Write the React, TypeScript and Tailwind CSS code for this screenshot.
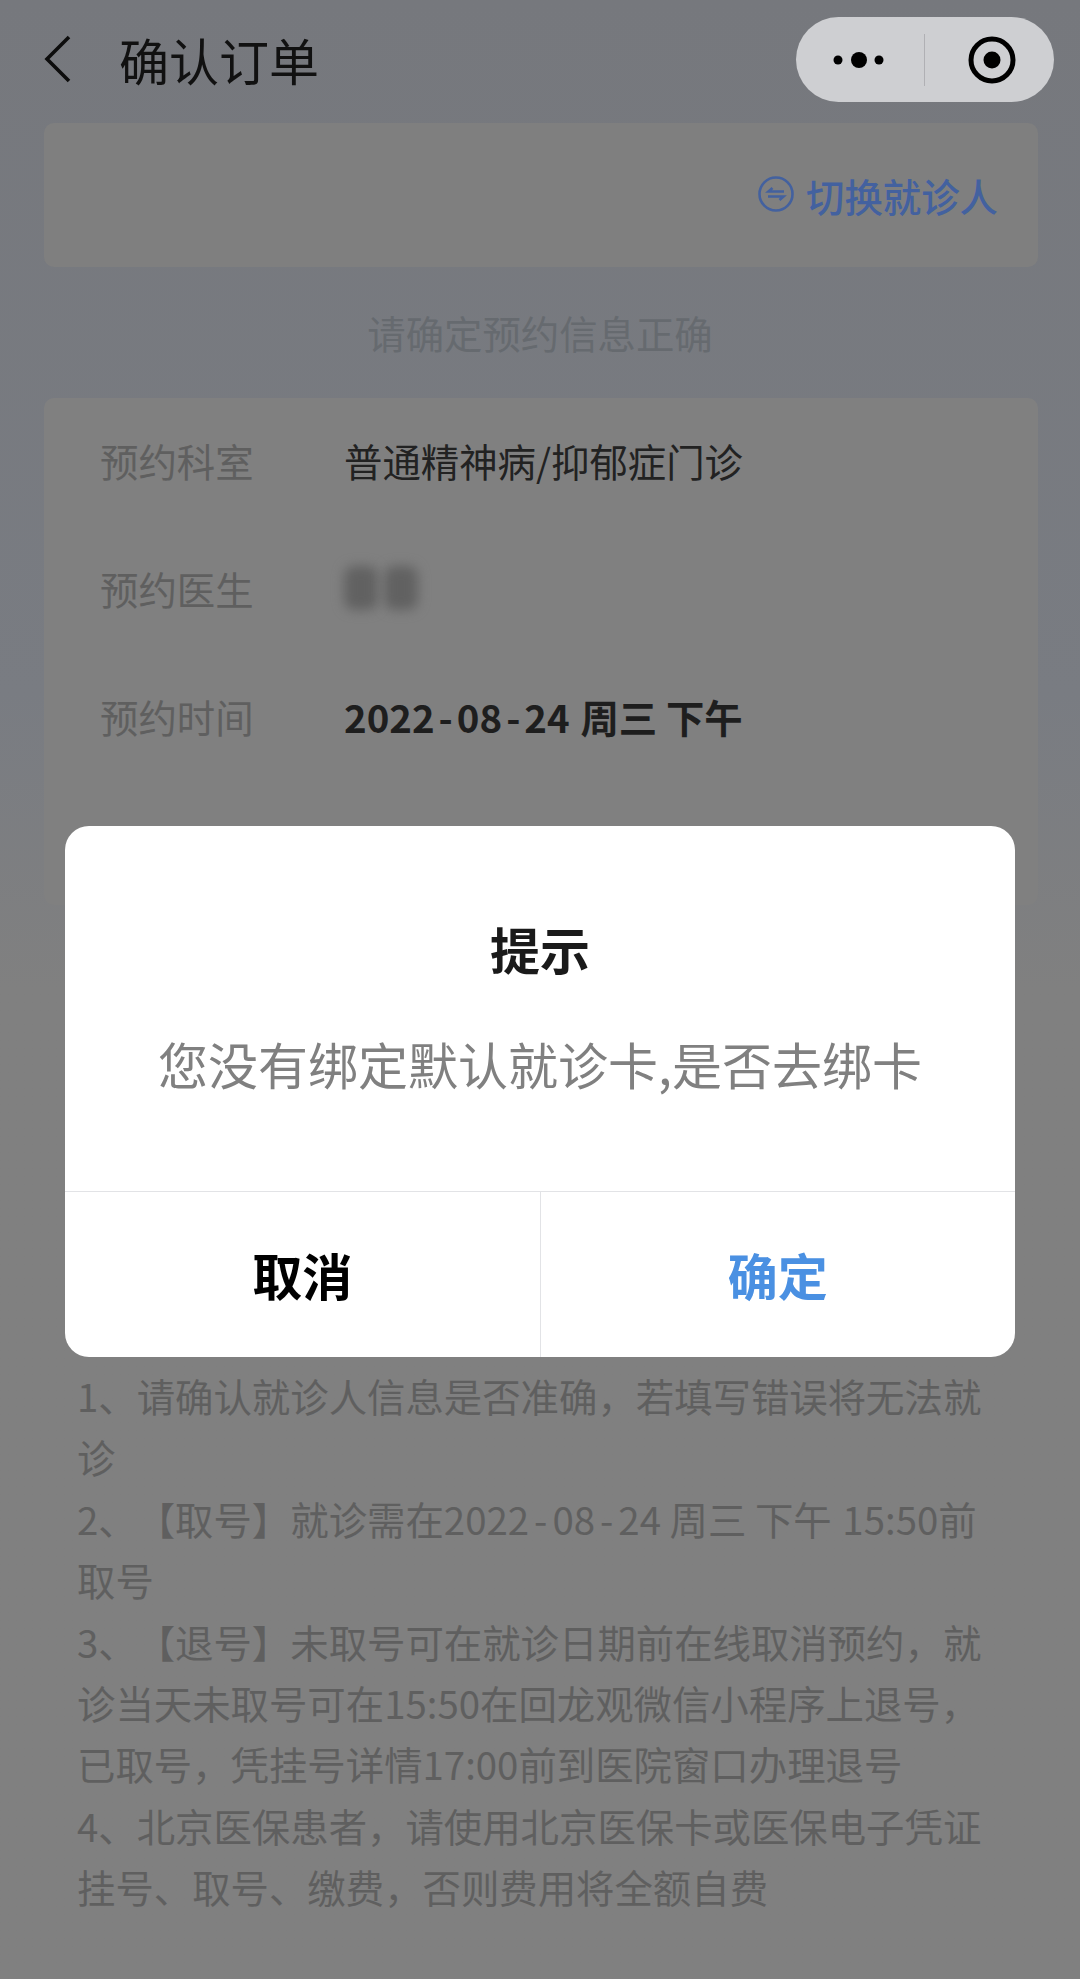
const fonts = "font-['Noto_Sans_CJK_SC','Noto_Sans',sans-serif] [text-spacing-trim:space-all]";

function InfoRow({ label, children }: { label: string; children: React.ReactNode }) {
  return (
    <div className="flex h-[128px] items-center pb-[4px]">
      <span className="w-[300px] shrink-0 pl-[56px] text-[38.4px] leading-none text-[#5f5f5f]">{label}</span>
      {children}
    </div>
  );
}

export default function App() {
  return (
    <div
      className={`${fonts} relative h-[1979px] w-[1080px] overflow-hidden bg-gradient-to-b from-[#76787d] via-[#797c82] via-35% to-[#808080] to-50%`}
    >
      {/* nav bar */}
      <div className="flex h-[123px] items-start justify-between pl-[44px] pr-[26px] pt-[17px]">
        <div className="flex h-[85px] items-center">
          <svg width="28" height="48" viewBox="0 0 28 48" fill="none" className="mt-[-2px]">
            <path d="M25 2 3 24l22 22" stroke="#0d0d0d" strokeWidth="3.6" />
          </svg>
          <span className="ml-[47px] pb-[2px] text-[50px] leading-none text-[#111111]">确认订单</span>
        </div>
        <div className="flex h-[85px] w-[258px] items-center rounded-full bg-[#cecfd2]">
          <div className="flex h-[52px] w-[129px] items-center justify-center border-r border-[#b0b0b4]">
            <svg width="56" height="20" viewBox="0 0 56 20" fill="#000">
              <circle cx="6" cy="10" r="4.5" />
              <circle cx="27" cy="10" r="8" />
              <circle cx="47" cy="10" r="4.5" />
            </svg>
          </div>
          <div className="flex flex-1 items-center justify-center pl-[4px]">
            <svg width="48" height="48" viewBox="0 0 48 48" fill="none">
              <circle cx="24" cy="24" r="21" stroke="#000" strokeWidth="5" />
              <circle cx="24" cy="24" r="8.5" fill="#000" />
            </svg>
          </div>
        </div>
      </div>

      {/* patient card */}
      <div className="ml-[44px] mr-[42px] flex h-[144px] items-center justify-end rounded-[10px] bg-[#7f7f7f] pr-[40px]">
        <svg width="36" height="36" viewBox="0 0 36 36" fill="none" stroke="#43619f" strokeWidth="2.6" className="mr-[12px] mt-[-2px]">
          <circle cx="18" cy="18" r="16.5" />
          <path d="M26 15.5H10.5l4-3.5" />
          <path d="M10 20.5h15.5l-4 3.5" />
        </svg>
        <span className="text-[38.4px] font-medium leading-none text-[#43619f]">切换就诊人</span>
      </div>

      <div className="flex h-[131px] items-center justify-center text-[38.4px] leading-none text-[#666a6f]">
        请确定预约信息正确
      </div>

      {/* appointment card */}
      <div className="ml-[44px] mr-[42px] h-[507px] rounded-[10px] bg-[#808080]">
        <InfoRow label="预约科室">
          <span className="text-[38.4px] leading-none text-[#222222]">普通精神病/抑郁症门诊</span>
        </InfoRow>
        <InfoRow label="预约医生">
          <div className="flex gap-[6px]">
            <div className="h-[44px] w-[34px] rounded-[10px] bg-[#616161] blur-[6px]" />
            <div className="h-[44px] w-[34px] rounded-[10px] bg-[#616161] blur-[6px]" />
          </div>
        </InfoRow>
        <InfoRow label="预约时间">
          <span className="text-[38.4px] font-bold leading-none whitespace-pre text-[#1e1e1e]">
            <span className="mr-[2px]">
              2022<span className="mx-[4px]">-</span>08<span className="mx-[4px]">-</span>24
            </span>{" "}
            周三 下午
          </span>
        </InfoRow>
      </div>

      {/* notes */}
      <div className="mt-[460px] pl-[77px] text-[38.4px] leading-[61.4px] whitespace-nowrap text-[#5f5f5f]">
        <div>1、请确认就诊人信息是否准确，若填写错误将无法就</div>
        <div>诊</div>
        <div>
          2、【取号】就诊需在2022<span className="mx-[5px]">-</span>08<span className="mx-[5px]">-</span>24 周三 下午{" "}
          <span className="ml-[2px]">15:50</span>前
        </div>
        <div>取号</div>
        <div>3、【退号】未取号可在就诊日期前在线取消预约，就</div>
        <div>诊当天未取号可在15:50在回龙观微信小程序上退号，</div>
        <div>已取号，凭挂号详情17:00前到医院窗口办理退号</div>
        <div>4、北京医保患者，请使用北京医保卡或医保电子凭证</div>
        <div>挂号、取号、缴费，否则费用将全额自费</div>
      </div>

      {/* dialog */}
      <div className="absolute left-[65px] top-[826px] flex h-[531px] w-[950px] flex-col rounded-[24px] bg-white">
        <div className="flex flex-1 flex-col items-center">
          <div className="mt-[97px] text-[50px] font-bold leading-[50px] text-[#1a1a1a]">提示</div>
          <div className="mt-[65px] text-[50px] leading-[50px] text-[#808080]">您没有绑定默认就诊卡,是否去绑卡</div>
        </div>
        <div className="flex h-[166px] border-t border-[#e2e3e6]">
          <div className="flex flex-1 items-center justify-center border-r border-[#e2e3e6] pb-[2px] text-[50px] font-bold leading-none text-black">
            取消
          </div>
          <div className="flex flex-1 items-center justify-center pb-[2px] text-[50px] font-bold leading-none text-[#4a90e2]">
            确定
          </div>
        </div>
      </div>
    </div>
  );
}
